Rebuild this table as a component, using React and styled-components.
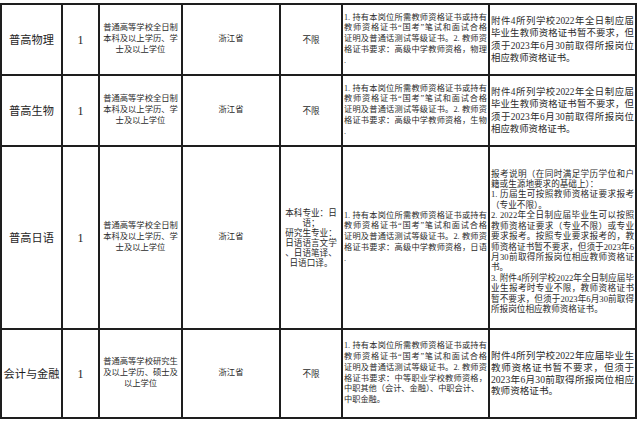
import React from 'react'
import styled, { createGlobalStyle } from 'styled-components'

const GlobalStyle = createGlobalStyle`
  body {
    margin: 0;
    background: #fff;
    font-family: "Liberation Serif", "Noto Sans CJK SC", serif;
    color: #222;
  }
`

const Sheet = styled.div`
  display: grid;
  grid-template-columns: 61px 37px 83px 98px 62px 147px 147px;
  grid-template-rows: 71px 71px 183px 89px;
  width: max-content;
  margin-top: 3px;
  border-top: 2px solid #1e1e1e;
  border-left: 2px solid #1e1e1e;
`

const Cell = styled.div`
  box-sizing: border-box;
  display: flex;
  flex-direction: column;
  justify-content: center;
  min-width: 0;
  border-right: 2px solid #1e1e1e;
  border-bottom: 2px solid #1e1e1e;
  padding: ${({ $top }) => $top || 0}px ${({ $pad }) => $pad || 0}px 0;
  text-align: ${({ $align }) => $align || 'center'};
  font-size: ${({ $size }) => $size}px;
  line-height: ${({ $lh }) => $lh}px;
  color: ${({ $color }) => $color || '#2b2b2b'};
`

const Line = styled.div`
  white-space: ${({ $keep }) => ($keep ? 'nowrap' : 'normal')};
  text-align: ${({ $justify }) => ($justify ? 'justify' : 'inherit')};
  text-align-last: ${({ $justify }) => ($justify ? 'justify' : 'auto')};
`

const Title = styled(Cell)`
  font-size: 11.2px;
  color: #1e1e1e;
`

const certBase = [
  '1. 持有本岗位所需教师资格证书或持有',
  '教师资格证书“国考”笔试和面试合格',
  '证明及普通话测试等级证书。2. 教师资',
]

const rows = [
  {
    subject: '普高物理',
    edu: ['普通高等学校全日制', '本科及以上学历、学', '士及以上学位'],
    age: ['不限'],
    cert: [...certBase, '格证书要求：高级中学教师资格，物理', '.'],
    note: ['附件4所列学校2022年全日制应届', '毕业生教师资格证书暂不要求，但', '须于2023年6月30前取得所报岗位', '相应教师资格证书。'],
    noteSize: 9.4,
    noteLh: 12.4,
  },
  {
    subject: '普高生物',
    edu: ['普通高等学校全日制', '本科及以上学历、学', '士及以上学位'],
    age: ['不限'],
    cert: [...certBase, '格证书要求：高级中学教师资格，生物', '.'],
    note: ['附件4所列学校2022年全日制应届', '毕业生教师资格证书暂不要求，但', '须于2023年6月30前取得所报岗位', '相应教师资格证书。'],
    noteSize: 9.4,
    noteLh: 12.4,
  },
  {
    subject: '普高日语',
    edu: ['普通高等学校全日制', '本科及以上学历、学', '士及以上学位'],
    age: ['本科专业：日', '语；', '研究生专业：', '日语语言文学', '、日语笔译、', '日语口译。'],
    cert: [...certBase, '格证书要求：高级中学教师资格，日语', '.'],
    note: [
      '报考说明（在同时满足学历学位和户',
      '籍或生源地要求的基础上）：',
      '1. 历届生可按照教师资格证要求报考',
      '（专业不限）。',
      '2. 2022年全日制应届毕业生可以按照',
      '教师资格证要求（专业不限）或专业',
      '要求报考。按照专业要求报考的，教',
      '师资格证书暂不要求，但须于2023年6',
      '月30前取得所报岗位相应教师资格证',
      '书。',
      '3. 附件4所列学校2022年全日制应届毕',
      '业生报考时专业不限，教师资格证书',
      '暂不要求，但须于2023年6月30前取得',
      '所报岗位相应教师资格证书。',
    ],
    noteShort: [1, 3, 9, 13],
    noteSize: 8.6,
    noteLh: 10.4,
    noteTop: 8,
  },
  {
    subject: '会计与金融',
    edu: ['普通高等学校研究生', '及以上学历、硕士及', '以上学位'],
    age: ['不限'],
    cert: [...certBase, '格证书要求：中等职业学校教师资格，', '中职其他（会计、金融）、中职会计、', '中职金融。'],
    note: ['附件4所列学校2022年应届毕业生', '教师资格证书暂不要求，但须于', '2023年6月30前取得所报岗位相应', '教师资格证书。'],
    noteSize: 9.6,
    noteLh: 11.8,
  },
]

const isShort = (text) => text.length < 6 || text === '.'

export default function App() {
  return (
    <>
      <GlobalStyle />
      <Sheet>
        {rows.map((r) => (
          <React.Fragment key={r.subject}>
            <Title $lh={14}>{r.subject}</Title>
            <Cell $size={12} $lh={14} $color="#222">1</Cell>
            <Cell $size={8.3} $lh={10.7}>
              {r.edu.map((t) => <Line key={t} $keep>{t}</Line>)}
            </Cell>
            <Cell $size={8.3} $lh={10.7}>浙江省</Cell>
            <Cell $size={8.6} $lh={10}>
              {r.age.map((t) => <Line key={t} $keep>{t}</Line>)}
            </Cell>
            <Cell $size={8.2} $lh={10.8} $align="left" $pad={1}>
              {r.cert.map((t, i) => (
                <Line key={i} $justify={i < 4 && !isShort(t)}>{t}</Line>
              ))}
            </Cell>
            <Cell $size={r.noteSize} $lh={r.noteLh} $align="left" $pad={1} $top={r.noteTop}>
              {r.note.map((t, i) => {
                const last = i === r.note.length - 1
                const short = r.noteShort ? r.noteShort.includes(i) : last
                return <Line key={i} $justify={!short && !last}>{t}</Line>
              })}
            </Cell>
          </React.Fragment>
        ))}
      </Sheet>
    </>
  )
}
